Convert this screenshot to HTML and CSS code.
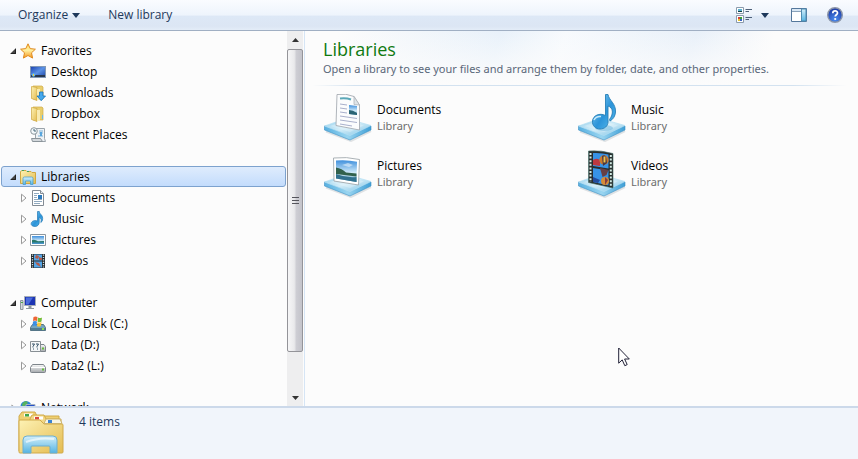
FILE: index.html
```
<!DOCTYPE html>
<html lang="en">
<head>
<meta charset="utf-8">
<title>Libraries</title>
<link rel="stylesheet" href="styles.css">
</head>
<body>
<svg class="defs" aria-hidden="true">
  <defs>
    <linearGradient id="gold" x1="0" y1="0" x2="1" y2="1"><stop offset="0" stop-color="#fdf2b4"/><stop offset="1" stop-color="#e4bb50"/></linearGradient>
    <linearGradient id="glass" x1="0" y1="0" x2="0" y2="1"><stop offset="0" stop-color="#d4effa"/><stop offset="1" stop-color="#55b4e2"/></linearGradient>
    <linearGradient id="tray" x1="0" y1="0" x2="1" y2="1"><stop offset="0" stop-color="#8fcdec"/><stop offset=".5" stop-color="#d3edf8"/><stop offset="1" stop-color="#79c0e4"/></linearGradient>
    <linearGradient id="edge" x1="0" y1="0" x2="1" y2="0"><stop offset="0" stop-color="#58b0e0"/><stop offset=".5" stop-color="#9ad5f0"/><stop offset="1" stop-color="#3f9fd6"/></linearGradient>
    <linearGradient id="note" x1="0" y1="0" x2="1" y2="1"><stop offset="0" stop-color="#8fd4f7"/><stop offset=".55" stop-color="#2c94d9"/><stop offset="1" stop-color="#59bdf0"/></linearGradient>
    <linearGradient id="screen" x1="0" y1="0" x2="1" y2="1"><stop offset="0" stop-color="#1a3fae"/><stop offset=".5" stop-color="#5c93e6"/><stop offset="1" stop-color="#1840a4"/></linearGradient>
    <linearGradient id="sky" x1="0" y1="0" x2="0" y2="1"><stop offset="0" stop-color="#3f8fdc"/><stop offset=".6" stop-color="#d6eefa"/><stop offset="1" stop-color="#4f94b4"/></linearGradient>
    <linearGradient id="drive" x1="0" y1="0" x2="0" y2="1"><stop offset="0" stop-color="#fafafa"/><stop offset="1" stop-color="#a4a8ac"/></linearGradient>
    <radialGradient id="help" cx=".5" cy=".8" r=".8"><stop offset="0" stop-color="#4a8cf0"/><stop offset="1" stop-color="#1a35a0"/></radialGradient>
    <linearGradient id="star" x1="0" y1="0" x2="0" y2="1"><stop offset="0" stop-color="#ffd65a"/><stop offset=".45" stop-color="#fff1a2"/><stop offset="1" stop-color="#f5961c"/></linearGradient>

    <symbol id="i-open" viewBox="0 0 8 8"><path d="M7 1v6H1z" fill="#444"/><path d="M6.500 2v4.500H2" fill="none" stroke="#222"/></symbol>
    <symbol id="i-closed" viewBox="0 0 8 10"><path d="M2.500 1.200 7 5 2.500 8.800z" fill="#fff" stroke="#999"/></symbol>
    <symbol id="i-star" viewBox="0 0 16 16"><path d="M8 .8l2.200 4.800 5.200.6-3.900 3.600 1.100 5.300L8 12.500l-4.600 2.600 1.100-5.300L.6 6.200l5.200-.6z" fill="url(#star)" stroke="#e08a20" stroke-linejoin="round"/></symbol>
    <symbol id="i-desktop" viewBox="0 0 16 16"><rect x=".5" y="2.500" width="15" height="11" fill="url(#screen)" stroke="#8399b5"/><path d="M1 11h14v2H1z" fill="#28384f"/><circle cx="3.500" cy="11" r="1.800" fill="#67b8ea"/><path d="M3 10h1v2H3z" fill="#f2cf3f"/></symbol>
    <symbol id="i-folder" viewBox="0 0 16 16"><path d="M3 1h9l1 1v12H3z" fill="#e9ce6c" stroke="#d0ab49" stroke-width=".7"/><path d="M1.500 1.500 7 2.500v13l-5.500-2z" fill="url(#gold)" stroke="#cda63f" stroke-width=".7"/><path d="M7 4h3v11H7z" fill="#f8eab0"/><path d="M12 9h1v4h-1z" fill="#6bb8ec"/></symbol>
    <symbol id="i-download" viewBox="0 0 16 16"><use href="#i-folder"/><path d="M9.500 7h3.500v4h2.500L11.200 15.700 7 11h2.500z" fill="#45a8ed" stroke="#1471b8" stroke-width=".8"/></symbol>
    <symbol id="i-recent" viewBox="0 0 16 16"><path d="M5.500 1.500h9v10l1 3h-11l-1-3h2z" fill="#eef2f5" stroke="#9aa3aa"/><path d="M1.500 11.500h9l2 3h-10z" fill="#d3d8dc" stroke="#8b949a"/><circle cx="4" cy="4" r="3.300" fill="#f3f8fb" stroke="#8e999f"/><path d="M4 2v2h2" fill="none" stroke="#467"/><path d="M9 4h4M9 6h4M8 9h5" stroke="#7db2d8"/><path d="M10 5h2v4h-2z" fill="#58a6de"/></symbol>
    <symbol id="i-libraries" viewBox="0 0 16 16"><path d="M.5 2.500 2 1.500h4l1 1h4l1 1h3.500v11H.5z" fill="url(#gold)" stroke="#cfa742"/><path d="M2 1.500h2M7 2.500h2" stroke="#43a45c"/><path d="M3 15.500v-6q0-1.500 1.500-1.500h7q1.500 0 1.500 1.500v6h-2.500V12h-5v3.500z" fill="url(#glass)" stroke="#4b9ece" stroke-width=".8"/></symbol>
    <symbol id="i-document" viewBox="0 0 16 16"><path d="M2.500.5h8l3 3v12h-11z" fill="#fff" stroke="#838b94"/><path d="M10.500.5v3h3" fill="#e8edf2" stroke="#838b94"/><path d="M4 3.500h5M4 5.500h3M4 7.500h3M4 9.500h8M4 11.500h8M4 13.500h6" stroke="#91aac0"/><path d="M8 5h4v4H8z" fill="#2d79bc"/></symbol>
    <symbol id="i-music" viewBox="0 0 16 16"><path d="M7.500.5h1.800c.2 3 4.200 3.400 3.200 8.500-.2 1-.8 2-1.700 2.500.8-2.500.4-4.500-1.600-5.300v5.300c0 2-1.600 4-4.200 4S.8 14.200 1.200 12.300c.4-2.300 3.800-3.600 6.300-2.300z" fill="url(#note)" stroke="#2379b5" stroke-width=".7"/></symbol>
    <symbol id="i-picture" viewBox="0 0 16 16"><path d="M.5 2.500h15v11H.5z" fill="#fff" stroke="#8c969e"/><path d="M2 4h12v8H2z" fill="url(#sky)"/><path d="M2 8q3-1 6 1.200L14 9v3H2z" fill="#28786a"/><path d="M2 10.500h12V12H2z" fill="#4694c8"/></symbol>
    <symbol id="i-video" viewBox="0 0 16 16"><path d="M1 1h14v14H1z" fill="#272c30"/><path d="M4 1.500h8v6H4zM4 8.500h8v6H4z" fill="#53a6e8"/><path d="M6 2l3 1-1 3-3-1zM9 4l3 1v2H9zM5 9l4 1 2 4-4-2z" fill="#b25c4c"/><path d="M2.500 1.500v13M13.500 1.500v13" stroke="#cfe0e4" stroke-width="1.300" stroke-dasharray="1.200 1.200"/></symbol>
    <symbol id="i-computer" viewBox="0 0 16 16"><path d="M4.500 1.500h11v9h-11z" fill="#1d35b4" stroke="#a5adb6"/><path d="M6 2.500h7L8.500 9.500H6z" fill="#4b6cdc"/><path d="M8.500 11h3v2H14v1H6v-1h2.500z" fill="#8e979e"/><path d="M.5 5.500h2.500v9H.5z" fill="#d5dade" stroke="#8e979e"/><path d="M1 7.500h2" stroke="#4ca84c"/></symbol>
    <symbol id="i-drive" viewBox="0 0 16 16"><path d="M2.500 6.500h11l2 3v4q0 1-1 1h-13q-1 0-1-1v-4z" fill="url(#drive)" stroke="#7e858b"/><path d="M1 9.500h14" stroke="#fff"/><path d="M12 10.500h2v2h-2z" fill="#65bd3d"/></symbol>
    <symbol id="i-system" viewBox="0 0 16 16"><path d="M2.500 8.500h11l2 3v3H.5v-3z" fill="#73a5c0" stroke="#56717f"/><path d="M1 12h14v2.500H1z" fill="#527c92"/><path d="M12 12h2v2h-2z" fill="#8ae051"/><path d="M3.500 1q2-1 4 0L7 5Q5 4 3 5z" fill="#ed6535"/><path d="M8 1.500q2 1 4 0L11.500 5.500q-2 1-4 0z" fill="#76bd37"/><path d="M3 5.500q2-1 4 0L6.500 10q-2-1-4 0z" fill="#3b8ee3"/><path d="M7.500 6q2 1 4 0L11 10q-2 1-4 0z" fill="#fbc73a"/></symbol>
    <symbol id="i-data" viewBox="0 0 16 16"><path d="M9 7.500h5l1.500 2v5H7z" fill="url(#drive)" stroke="#7e858b"/><path d="M.5 4.500h10v10H.5z" fill="#f5f7f8" stroke="#888f94"/><path d="M2 7h2.500L3 9.500v1M6 7h2.500L7 9.500v1M3 12h1M7 12h1" stroke="#324f64" fill="none"/><path d="M12 10.500h2v2h-2z" fill="#65bd3d"/></symbol>
    <symbol id="i-network" viewBox="0 0 16 16"><circle cx="6" cy="6.500" r="5.500" fill="#2d84d8"/><path d="M2 4q3-4 5-2.500T5 6L3 9z" fill="#57b35d"/><path d="M6 4.500h9v8H6z" fill="#2551ca" stroke="#a6b2c2"/></symbol>

    <symbol id="i-tray" viewBox="0 0 48 48"><path d="M2 37.500 27 47 47 37" fill="none" stroke="#9ba6ad" stroke-opacity=".3" stroke-width="2"/><path d="M.5 32v4L26 46l21-10v-4z" fill="url(#edge)" stroke="#3d91c4" stroke-width=".6"/><path d="M.5 32 22 24.500 47 31.500 26 41.500z" fill="url(#tray)" stroke="#b5e0f3" stroke-width=".7"/><path d="M6 32l16-5.500 18 5-14 6.500z" fill="#fff" opacity=".25"/></symbol>
    <symbol id="b-document" viewBox="0 0 48 48"><use href="#i-tray"/><path d="M13 .5q9-1.500 17 2l5.500 8.500v25L12 31.500z" fill="#fbfcfd" stroke="#a7adb3" stroke-width=".9"/><path d="M30 2.500v8l5.500.5z" fill="#dfe4e8" stroke="#a7adb3" stroke-width=".7"/><path d="M16 4.500q6-.8 11 1" stroke="#5ba8b8" stroke-width="2" fill="none"/><path d="M16 10l7 1M16 14l7 1M16 18l7 1M16 22l17 2.500M16 26l17 2.500M16 30l12 2" stroke="#a9b0cc"/><path d="M25 11l8 1v9l-8-1z" fill="url(#sky)"/><path d="M25 16q4 0 8 3v2l-8-1z" fill="#2c6575"/></symbol>
    <symbol id="b-picture" viewBox="0 0 48 48"><use href="#i-tray"/><path d="M9.500 8q13-1.500 26 1.500L34.500 35 10 31z" fill="#fff" stroke="#a2a9ae" stroke-width=".9"/><path d="M12 10.500q11-1 21 1.200L32.500 32 12 28.500z" fill="url(#sky)"/><path d="M12 17.500q6 1 10 5l10.500 1v3L20 25l-8-1z" fill="#31614c"/><path d="M12 24q10 4 20.500 3v5L12 28.500z" fill="#31718e"/><path d="M18 15l6-2 5 2-4 2z" fill="#fff" opacity=".5"/></symbol>
    <symbol id="b-music" viewBox="0 0 48 48"><use href="#i-tray"/><ellipse cx="26" cy="34" rx="9" ry="3" fill="#6bb5dd" opacity=".5"/><path d="M27.500.5h2.500c1 6 8 9 7.500 17.500-.2 4-2.500 7.500-5.500 9l-.5-1.500c4.500-6 3.500-12-1.500-13.500v16c0 4-3.500 7-8 7s-8-3.500-7.500-8c.5-5.500 7-8.500 13-5.500z" fill="url(#note)" stroke="#287fb7" stroke-width=".9"/><path d="M16 26q2-4 7-3.500" stroke="#c8ebfb" stroke-width="1.500" fill="none"/></symbol>
    <symbol id="b-video" viewBox="0 0 48 48"><use href="#i-tray"/><path d="M10.500 1q13-1 24.500 2.500V38L10.500 32.500z" fill="#292e2e" stroke="#3f6b64" stroke-width=".6"/><path d="M15 3q8-.5 15.500 1.500v14L15 16zM15 18l15.500 2.500v15L15 32z" fill="#3793e7"/><path d="M15 10q5-3 7 1v5l-7-1z" fill="#be3941"/><circle cx="26" cy="10" r="4.700" fill="#c97a2d"/><path d="M24 6q3-2 4 1l1 6-4 3z" fill="#443545"/><path d="M25.500 6.500h2v6h-2z" fill="#efc24a"/><path d="M22 18l8.500 2-2 5-4 2z" fill="#673f45"/><circle cx="27" cy="31" r="4" fill="#d68c37"/><path d="M27 27l3 3-3 5z" fill="#853c43"/><path d="M15 27l7 3-2 3-5-1z" fill="#244d9e"/><path d="M12.500 3v29M32.800 5v31" stroke="#d3eee6" stroke-width="2" stroke-dasharray="2 1.600"/></symbol>
  </defs>
</svg>

<header class="toolbar">
  <button class="tool" type="button">Organize <svg class="caret" viewBox="0 0 8 5"><path d="M0 0h8L4 5z"/></svg></button>
  <button class="tool" type="button">New library</button>
  <div class="tools-right">
    <button class="tool icon-tool view-tool" type="button" aria-label="Change your view">
      <svg class="i16" viewBox="0 0 16 16"><path d="M.5.5h7v6h-7zM.5 8.500h7v7h-7z" fill="#fff" stroke="#8b9bac"/><path d="M2 2h4v3H2z" fill="#5cb3d2"/><path d="M2 4h4v1H2z" fill="#173d44"/><path d="M2 10h2v2H2z" fill="#d43d35"/><path d="M4 10h2v2H4z" fill="#379d3d"/><path d="M2 12h2v2H2z" fill="#e7c329"/><path d="M4 12h2v2H4z" fill="#3864c4"/><path d="M9.500 2.500H16M9.500 4.500H13M9.500 10.500H16M9.500 12.500H13" stroke="#4e6079"/></svg>
      <svg class="caret" viewBox="0 0 8 5"><path d="M0 0h8L4 5z"/></svg>
    </button>
    <button class="tool icon-tool" type="button" aria-label="Show the preview pane">
      <svg class="i16" viewBox="0 0 16 16"><path d="M.5 1.500h15v13H.5z" fill="#fff" stroke="#54779b"/><path d="M1 2h14v2H1z" fill="#d9e7f4"/><path d="M1 4.500h14" stroke="#8aa3bb"/><path d="M10.500 2h4.500v12h-4.500z" fill="url(#glass)" stroke="#4f8db2"/></svg>
    </button>
    <button class="tool icon-tool" type="button" aria-label="Get help">
      <svg class="i16" viewBox="0 0 16 16"><circle cx="8" cy="8" r="7.300" fill="url(#help)" stroke="#8d96a8" stroke-width="1.400"/><path d="M5.800 6.200c0-3 4.700-3 4.700-.2 0 1.700-2.300 1.800-2.300 3.600" fill="none" stroke="#fff" stroke-width="1.700"/><circle cx="8.200" cy="12" r="1.100" fill="#fff"/></svg>
    </button>
  </div>
</header>

<div class="middle">
  <aside class="sidebar">
    <nav class="tree" aria-label="Navigation">
      <ul class="group">
        <li><a class="row root" href="#"><svg class="twist"><use href="#i-open"/></svg><svg class="i16"><use href="#i-star"/></svg>Favorites</a></li>
        <li><a class="row" href="#"><span class="twist"></span><svg class="i16"><use href="#i-desktop"/></svg>Desktop</a></li>
        <li><a class="row" href="#"><span class="twist"></span><svg class="i16"><use href="#i-download"/></svg>Downloads</a></li>
        <li><a class="row" href="#"><span class="twist"></span><svg class="i16"><use href="#i-folder"/></svg>Dropbox</a></li>
        <li><a class="row" href="#"><span class="twist"></span><svg class="i16"><use href="#i-recent"/></svg>Recent Places</a></li>
      </ul>
      <ul class="group">
        <li><a class="row root selected" href="#" aria-current="page"><svg class="twist"><use href="#i-open"/></svg><svg class="i16"><use href="#i-libraries"/></svg>Libraries</a></li>
        <li><a class="row" href="#"><svg class="twist"><use href="#i-closed"/></svg><svg class="i16"><use href="#i-document"/></svg>Documents</a></li>
        <li><a class="row" href="#"><svg class="twist"><use href="#i-closed"/></svg><svg class="i16"><use href="#i-music"/></svg>Music</a></li>
        <li><a class="row" href="#"><svg class="twist"><use href="#i-closed"/></svg><svg class="i16"><use href="#i-picture"/></svg>Pictures</a></li>
        <li><a class="row" href="#"><svg class="twist"><use href="#i-closed"/></svg><svg class="i16"><use href="#i-video"/></svg>Videos</a></li>
      </ul>
      <ul class="group">
        <li><a class="row root" href="#"><svg class="twist"><use href="#i-open"/></svg><svg class="i16"><use href="#i-computer"/></svg>Computer</a></li>
        <li><a class="row" href="#"><svg class="twist"><use href="#i-closed"/></svg><svg class="i16"><use href="#i-system"/></svg>Local Disk (C:)</a></li>
        <li><a class="row" href="#"><svg class="twist"><use href="#i-closed"/></svg><svg class="i16"><use href="#i-data"/></svg>Data (D:)</a></li>
        <li><a class="row" href="#"><svg class="twist"><use href="#i-closed"/></svg><svg class="i16"><use href="#i-drive"/></svg>Data2 (L:)</a></li>
      </ul>
      <ul class="group">
        <li><a class="row root" href="#"><svg class="twist"><use href="#i-closed"/></svg><svg class="i16"><use href="#i-network"/></svg>Network</a></li>
      </ul>
    </nav>
    <div class="scrollbar" aria-hidden="true">
      <svg class="arrow" viewBox="0 0 7 4"><path d="M3.500 0 7 4H0z"/></svg>
      <div class="track"><div class="thumb"><span></span><span></span><span></span></div></div>
      <svg class="arrow" viewBox="0 0 7 4"><path d="M0 0h7L3.500 4z"/></svg>
    </div>
  </aside>

  <main class="content">
    <div class="heading">
      <h1>Libraries</h1>
      <p>Open a library to see your files and arrange them by folder, date, and other properties.</p>
    </div>
    <div class="items">
      <a class="item" href="#"><svg class="i48"><use href="#b-document"/></svg><span><span class="name">Documents</span><span class="kind">Library</span></span></a>
      <a class="item" href="#"><svg class="i48"><use href="#b-music"/></svg><span><span class="name">Music</span><span class="kind">Library</span></span></a>
      <a class="item" href="#"><svg class="i48"><use href="#b-picture"/></svg><span><span class="name">Pictures</span><span class="kind">Library</span></span></a>
      <a class="item" href="#"><svg class="i48"><use href="#b-video"/></svg><span><span class="name">Videos</span><span class="kind">Library</span></span></a>
    </div>
    <svg class="pointer" viewBox="0 0 12 20" aria-hidden="true"><path d="M.7 1v15.200l3.500-3.300 2.600 5.800 2.400-1.100-2.600-5.600h4.700z" fill="#fff" stroke="#222238"/></svg>
  </main>
</div>

<footer class="status">
  <svg class="status-icon" viewBox="0 0 48 48">
    <path d="M2 7 5 3h13l2 4h22v35H2z" fill="#efd071" stroke="#d1aa4a"/>
    <path d="M7 4.500h9v3H7z" fill="#fff"/><path d="M8 5h4v2.500H8z" fill="#43a64a"/>
    <path d="M13 10l2-4h12l2 4h15v32H13z" fill="#f3d885" stroke="#d1aa4a"/>
    <path d="M17 7.500h9v3h-9z" fill="#fff"/><path d="M18 8h4v2.500h-4z" fill="#d9483c"/>
    <path d="M2 42V12q0-1 1-1h20l4 4h18q1 0 1 1v27q0 1-1 1H3q-1 0-1-1z" fill="url(#gold)" stroke="#d1aa4a"/>
    <path d="M27 14.500 29 10h14l2 4.500z" fill="#f8f5e6" stroke="#cdb56e"/><path d="M31 11h4v3h-4z" fill="#3b83d2"/>
    <path d="M6 44V31q0-4 4-4h26q4 0 4 4v13h-7v-6q0-1-1-1H15q-1 0-1 1v6z" fill="url(#glass)" stroke="#6caed0"/>
    <path d="M9 33q13-5 28-3" fill="none" stroke="#fff" stroke-opacity=".6" stroke-width="2"/>
  </svg>
  <span>4 items</span>
</footer>
</body>
</html>
```
FILE: styles.css
```
* { box-sizing: border-box; }

body {
  margin: 0;
  height: 100vh;
  display: flex;
  flex-direction: column;
  overflow: hidden;
  background: #fcfcfc;
  color: #000;
  font: 12px/16px "Open Sans", "Noto Sans", sans-serif;
}

a { color: inherit; text-decoration: none; }
svg { display: block; flex: none; }
.defs { position: absolute; width: 0; height: 0; }
.i16 { width: 16px; height: 16px; }
.i48 { width: 48px; height: 48px; }

.toolbar {
  flex: none;
  display: flex;
  align-items: center;
  gap: 28px;
  height: 31px;
  padding: 0 15px 0 18px;
  border-bottom: 1px solid #a0afc3;
  background: linear-gradient(#fafcff 0, #eef4fc 50%, #dde8f6 54%, #dce6f4 88%, #e4edf8 100%);
}

.tool {
  display: flex;
  align-items: center;
  gap: 4px;
  padding: 0;
  border: 0;
  background: none;
  color: #1e395b;
  font: inherit;
}

.caret { width: 8px; height: 5px; fill: #1e395b; }
.tools-right { display: flex; gap: 20px; margin-left: auto; }
.view-tool { gap: 9px; margin-right: 2px; }

.middle { flex: 1; display: flex; min-height: 0; }

.sidebar {
  flex: none;
  display: flex;
  width: 305px;
  border-right: 1px solid #d6e5f5;
}

.tree { flex: 1; padding: 9px 1px 0; overflow: hidden; }
.group { margin: 0 0 21px; padding: 0; list-style: none; }

.row {
  display: flex;
  align-items: center;
  gap: 3px;
  height: 21px;
  padding-left: 17px;
  border: 1px solid transparent;
  border-radius: 3px;
}

.row.root { padding-left: 7px; }
.root .twist { height: 8px; }
.row .i16 { margin-right: 2px; }
.twist { width: 8px; height: 10px; flex: none; }
.row.selected { border-color: #7da2ce; background: linear-gradient(#dfecfd, #c3dcfc); }

.scrollbar {
  display: flex;
  flex-direction: column;
  align-items: center;
  width: 16px;
  margin-right: 1px;
  padding: 7px 0 6px;
  gap: 7px;
  background: #eeeeef;
}

.arrow { width: 7px; height: 4px; fill: #333; }
.track { flex: 1; width: 100%; min-height: 0; }

.thumb {
  display: flex;
  flex-direction: column;
  align-items: center;
  justify-content: center;
  gap: 2px;
  height: 89%;
  border: 1px solid #949499;
  border-radius: 2px;
  background: linear-gradient(90deg, #f6f6f7, #e9e9eb 45%, #cdcdd3 60%, #c3c3ca);
}

.thumb span { width: 7px; height: 1px; background: #55555c; }

.content {
  flex: 1;
  min-width: 0;
  position: relative;
  padding: 0 12px 0 8px;
  background: linear-gradient(#fcfcfc00, #fcfcfc 54px), linear-gradient(105deg, #fcfcfc 5%, #e8f1fa 30%, #f7fafd 40%, #e8f0f9 60%, #fcfcfc 72%);
}

.heading {
  padding: 6px 10px 8px;
  border-bottom: 1px solid;
  border-image: linear-gradient(90deg, #d9e6f300, #d3e2f0 8%, #d3e2f0 90%, #d9e6f300) 1;
}

.heading h1 { margin: 0; color: #107a10; font-size: 18px; font-weight: 400; line-height: 24px; }
.heading p { margin: 0; color: #5a6779; }
.heading p, .kind { font-family: "Noto Sans", "Open Sans", sans-serif; font-size: 11px; }

.items {
  display: grid;
  grid-template-columns: repeat(auto-fill, 246px);
  gap: 8px;
  padding: 8px 11px;
}

.item { display: flex; align-items: center; gap: 5px; }
.name, .kind { display: block; }
.kind { color: #6d6d6d; }

.pointer { position: absolute; left: 313px; top: 316px; width: 12px; height: 20px; }

.status {
  flex: none;
  display: flex;
  gap: 14px;
  height: 53px;
  padding: 1px 17px;
  border-top: 2px solid #ccd9ea;
  background: #f1f5fb;
  color: #1e395b;
}

.status-icon { width: 48px; height: 48px; }
.status span { padding-top: 5px; }
```
